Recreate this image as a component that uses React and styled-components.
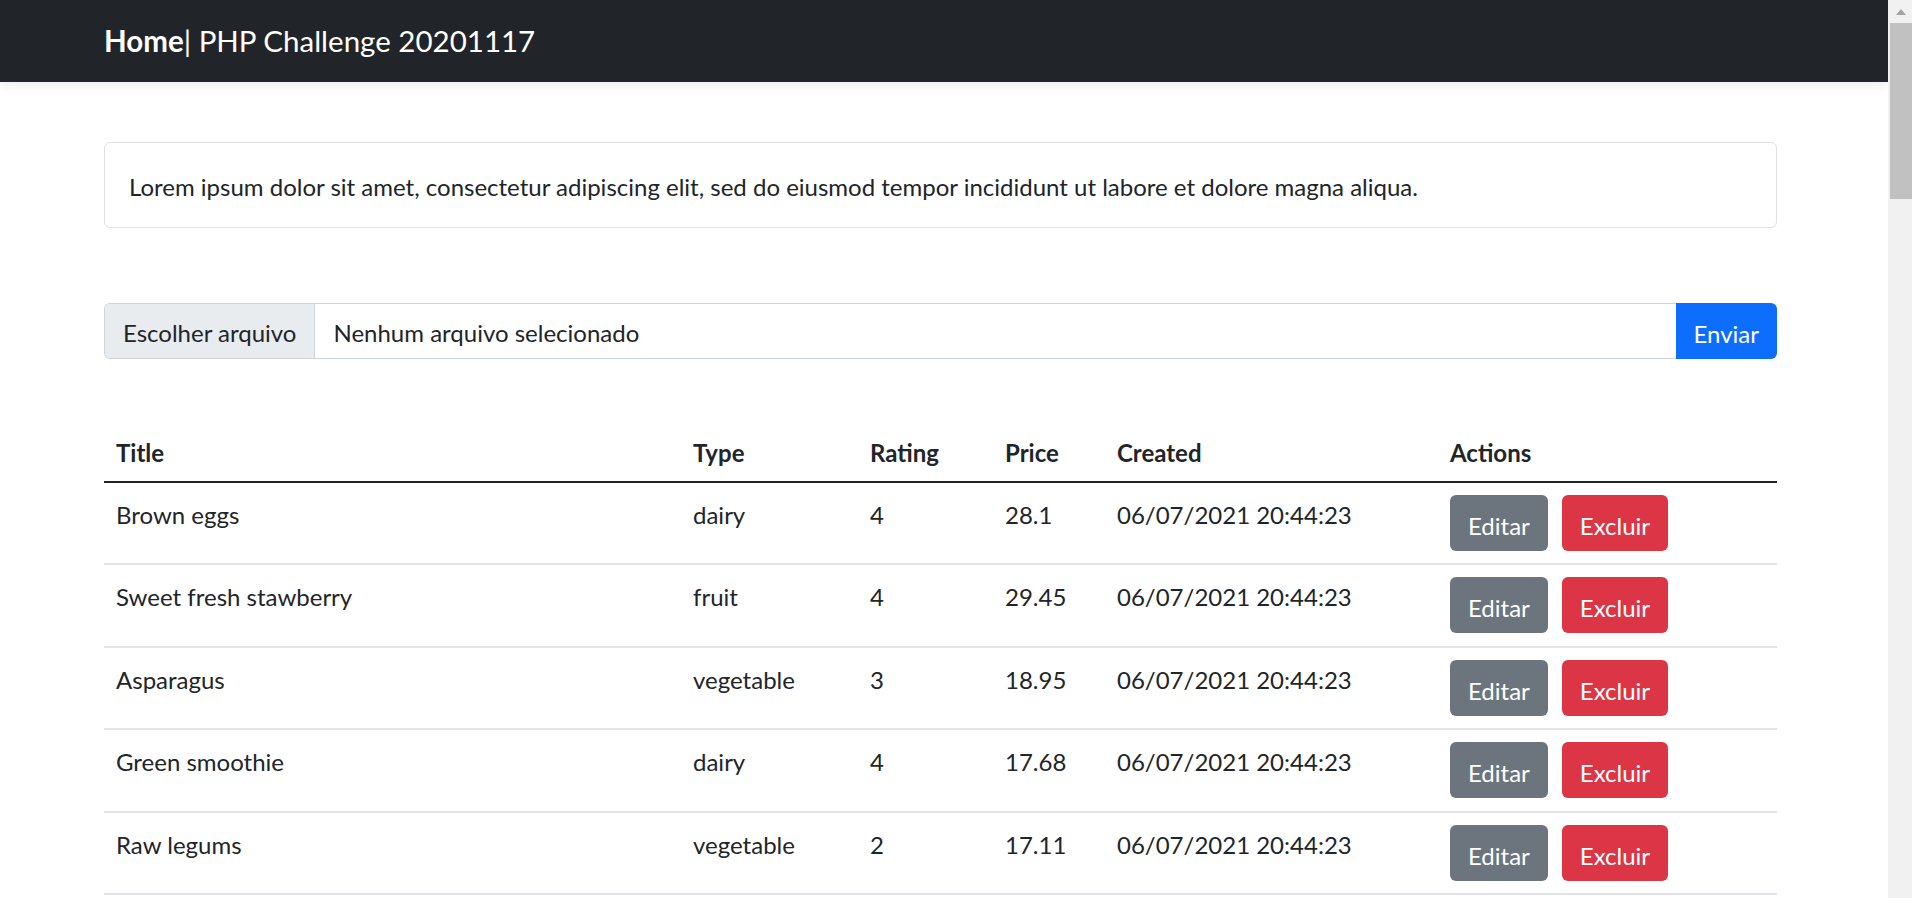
import styled, { createGlobalStyle } from "styled-components";

const GlobalStyle = createGlobalStyle`
  body {
    margin: 0;
    font-family: Lato, "Open Sans", sans-serif;
    font-size: 24px;
    line-height: 1.5;
    color: #212529;
    background: #fff;
  }
`;

const products = [
  ["Brown eggs", "dairy", 4, "28.1"],
  ["Sweet fresh stawberry", "fruit", 4, "29.45"],
  ["Asparagus", "vegetable", 3, "18.95"],
  ["Green smoothie", "dairy", 4, "17.68"],
  ["Raw legums", "vegetable", 2, "17.11"],
];

export default function App() {
  return (
    <>
      <GlobalStyle />
      <Window>
        <Page>
          <Navbar>
            <Brand>
              <strong>Home</strong>| PHP Challenge 20201117
            </Brand>
          </Navbar>
          <Container>
            <Card>Lorem ipsum dolor sit amet, consectetur adipiscing elit, sed do eiusmod tempor incididunt ut labore et dolore magna aliqua.</Card>

            <UploadForm>
              <FileField>
                <FileButton>Escolher arquivo</FileButton>
                <FileName>Nenhum arquivo selecionado</FileName>
              </FileField>
              <Button $variant="primary" $joined>Enviar</Button>
            </UploadForm>

            <Table>
              <colgroup>
                <col style={{ width: 577 }} />
                <col style={{ width: 177 }} />
                <col style={{ width: 135 }} />
                <col style={{ width: 112 }} />
                <col style={{ width: 333 }} />
                <col />
              </colgroup>
              <thead>
                <tr>
                  <th>Title</th>
                  <th>Type</th>
                  <th>Rating</th>
                  <th>Price</th>
                  <th>Created</th>
                  <th>Actions</th>
                </tr>
              </thead>
              <tbody>
                {products.map(([title, type, rating, price]) => (
                  <tr key={title}>
                    <td>{title}</td>
                    <td>{type}</td>
                    <td>{rating}</td>
                    <td>{price}</td>
                    <td>06/07/2021 20:44:23</td>
                    <td>
                      <Actions>
                        <Button $variant="secondary">Editar</Button>
                        <Button $variant="danger">Excluir</Button>
                      </Actions>
                    </td>
                  </tr>
                ))}
              </tbody>
            </Table>
          </Container>
        </Page>

        <ScrollTrack>
          <ScrollArrow />
          <ScrollThumb />
        </ScrollTrack>
      </Window>
    </>
  );
}

const Window = styled.div`
  display: flex;
  height: 100vh;
  overflow: hidden;
`;

const Page = styled.div`
  flex: 1;
  min-width: 0;
  overflow: hidden;
`;

const ScrollTrack = styled.div`
  width: 24px;
  flex-shrink: 0;
  background: #f1f1f1;
  display: flex;
  flex-direction: column;
`;

const ScrollArrow = styled.div`
  height: 23px;
  display: flex;
  justify-content: center;
  align-items: center;

  &::before {
    content: "";
    border-left: 5.5px solid transparent;
    border-right: 5.5px solid transparent;
    border-bottom: 6px solid #a3a3a3;
    margin-left: 2px;
  }
`;

const ScrollThumb = styled.div`
  height: 176px;
  margin-left: 2px;
  background: #c1c1c1;
`;

const Navbar = styled.nav`
  height: 82px;
  background-color: #212529;
  display: flex;
  align-items: center;
  padding-left: 104px;
  box-shadow: 0 4px 10px rgba(0, 0, 0, 0.08);
  position: relative;
`;

const Brand = styled.a`
  color: #fff;
  font-size: 29.5px;
  line-height: 1.5;
  white-space: pre;

  strong {
    font-weight: 700;
  }
`;

const Container = styled.main`
  width: 1673px;
  padding: 60px 0 0 104px;
`;

const Card = styled.div`
  border: 1.5px solid #dfdfdf;
  border-radius: 6px;
  padding: 26px 24px 22px;
  line-height: 36px;
`;

const UploadForm = styled.form`
  display: flex;
  margin-top: 75px;
  height: 56px;
`;

const FileField = styled.div`
  flex: 1;
  display: flex;
  align-items: center;
  border: 1.5px solid #ced4da;
  border-right: none;
  border-radius: 6px 0 0 6px;
  overflow: hidden;
`;

const FileButton = styled.span`
  height: 100%;
  box-sizing: border-box;
  display: flex;
  align-items: center;
  padding: 4px 18px 0;
  background: #e9ecef;
  border-right: 1.5px solid #ced4da;
`;

const FileName = styled.span`
  padding: 4px 0 0 18px;
`;

const colors = {
  primary: "#0d6efd",
  secondary: "#6c757d",
  danger: "#dc3545",
};

const Button = styled.button`
  font: inherit;
  font-size: 24px;
  line-height: 36px;
  color: #fff;
  background: ${(p) => colors[p.$variant]};
  border: none;
  padding: 13px 18px 7px;
  height: 56px;
  border-radius: ${(p) => (p.$joined ? "0 6px 6px 0" : "6px")};
  cursor: pointer;
`;

const Actions = styled.div`
  display: flex;
  gap: 14px;
`;

const Table = styled.table`
  margin-top: 62px;
  width: 100%;
  table-layout: fixed;
  border-collapse: collapse;

  th,
  td {
    text-align: left;
    vertical-align: top;
  }

  th {
    font-weight: 700;
    padding: 14px 12px 10px;
    line-height: 36px;
    border-bottom: 2px solid #212529;
  }

  td {
    padding: 12px 12px 12.4px;
    line-height: 40px;
    border-bottom: 2px solid #e1e3e6;
  }
`;
